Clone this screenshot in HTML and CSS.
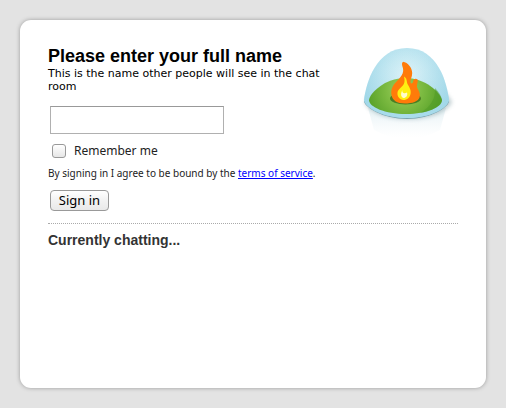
FILE: index.html
```html
<!DOCTYPE html>
<html lang="en">
<head>
<meta charset="utf-8">
<title>Sign in</title>
<link rel="stylesheet" href="styles.css">
</head>
<body>
<main class="card">
  <div class="top">
    <form class="signin">
      <h1 class="title"><label for="name">Please enter your full name</label></h1>
      <p class="hint">This is the name other people will see in the chat room</p>
      <input class="name" id="name" type="text">
      <div class="remember">
        <input class="check" id="remember" type="checkbox">
        <label for="remember">Remember me</label>
      </div>
      <p class="terms">By signing in I agree to be bound by the <a href="#">terms of service</a>.</p>
      <button class="submit" type="submit">Sign in</button>
    </form>
    <svg class="logo" viewBox="8 15 100 98" aria-hidden="true">
      <defs>
        <radialGradient id="dome" gradientUnits="userSpaceOnUse" cx="57" cy="48" r="46">
          <stop offset="0" stop-color="#eaf8fb"/>
          <stop offset=".45" stop-color="#c8eaf3"/>
          <stop offset="1" stop-color="#9fd7e8"/>
        </radialGradient>
        <linearGradient id="rim" x1="0" y1="0" x2="0" y2="1">
          <stop offset="0" stop-color="#a4d9e9" stop-opacity="0"/>
          <stop offset=".7" stop-color="#a4d9e9" stop-opacity=".3"/>
          <stop offset="1" stop-color="#a9dcec"/>
        </linearGradient>
        <radialGradient id="grass" gradientUnits="userSpaceOnUse" cx="54" cy="60" r="36">
          <stop offset="0" stop-color="#a2d266"/>
          <stop offset=".5" stop-color="#7dbb42"/>
          <stop offset="1" stop-color="#5aa32b"/>
        </radialGradient>
        <linearGradient id="mirror" gradientUnits="userSpaceOnUse" x1="0" y1="84" x2="0" y2="108">
          <stop offset="0" stop-color="#c8e2e9" stop-opacity=".35"/>
          <stop offset="1" stop-color="#e4f2f6" stop-opacity="0"/>
        </linearGradient>
        <filter id="soft" x="-20%" y="-40%" width="140%" height="180%"><feGaussianBlur stdDeviation="2"/></filter>
      </defs>
      <path fill="url(#mirror)" d="M18 78L24 100Q57 118 90 100L96 78Z"/>
      <path fill="#7f9ba2" opacity=".5" filter="url(#soft)" d="M15 73C25 94 91 95 102 72L95 62H20Z"/>
      <path fill="#79a4b0" d="M14 71C14 77 33 89 57 89S99 77 99 71Z"/>
      <path fill="url(#dome)" d="M14 70C16 53 26 18 57 18S97 53 99 70C98 78 80 88 57 88S15 78 14 70Z"/>
      <path fill="url(#rim)" d="M14 70C16 53 26 18 57 18S97 53 99 70C98 78 80 88 57 88S15 78 14 70Z"/>
      <path fill="url(#grass)" d="M19 70C20 63 35 48 55 48S90 62 92 70C92 77 77 84 56 84S19 77 19 70Z"/>
      <path fill="#4d9a25" opacity=".5" d="M85 58Q91 64 92 70C92 76 82 81 70 83Q86 74 85 58Z"/>
      <ellipse cx="55.5" cy="68.500" rx="15.5" ry="6" fill="#4b7e24"/>
      <path fill="#ff7b0a" d="M53 31.700C58 32.500 62 37.500 62.200 43C62.300 47 60 50 60.500 52.500C61 54 62.500 53.700 63 52C63.500 49 65.500 48 67.500 49.500C68.500 51.500 66 55 67.500 58.500C69 61.500 70.500 63.500 69.700 67C68.500 71.500 62 73.500 55 73.500C47 73.500 42 70.500 41.300 64C40.800 58 44 54 47 51C51 47 54 43 53 38.500C52.600 36 51 33.500 53 31.700Z"/>
      <path fill="#ffef12" d="M54 46.500C57 48 56.500 51 57.500 54C59 57 61 59 60.700 63C60.300 67.500 57 70 53.500 70C49.500 69.500 47 66.500 47.500 62.500C48 59 52 57.500 53.800 54C55 51.500 54.500 49 54 46.500Z"/>
      <path fill="#fffccf" d="M52.500 60C51.500 62.500 54 64.500 57 62.500C58 65.500 56 68 53.500 68C50.500 67 50.500 63 52.500 60Z"/>
    </svg>
  </div>
  <section class="chatting">
    <h2 class="subtitle">Currently chatting...</h2>
  </section>
</main>
</body>
</html>
```
FILE: styles.css
```css
* {
  box-sizing: border-box;
}

body {
  margin: 0;
  min-height: 100vh;
  display: flex;
  padding: 20px;
  background: #e3e3e3;
  color: #000;
  font-family: "Noto Sans", sans-serif;
}

.card {
  flex: 1;
  min-width: 0;
  padding: 25px 28px;
  background: #fff;
  border-radius: 11px;
  box-shadow: 0 0 4px #999;
}

.top {
  display: flex;
  justify-content: space-between;
  padding-bottom: 12px;
  border-bottom: 1px dotted #aaa;
}

.signin {
  flex: 1;
  max-width: 290px;
}

.title,
.subtitle,
.hint,
.terms {
  margin: 0;
}

.title {
  font: bold 18px/22px "Liberation Sans", Arial, sans-serif;
}

.hint {
  font: 11px/13px "DejaVu Sans", Verdana, sans-serif;
}

.name {
  display: block;
  width: 174px;
  height: 28px;
  margin: 13px 2px 8px;
  padding: 2px 6px;
  border: 1px solid #b0b0b0;
  border-top-color: #999;
  border-radius: 0;
  background: #fff;
  font: 14px "Noto Sans", sans-serif;
}

.remember {
  display: flex;
  align-items: center;
  gap: 8px;
  padding-left: 4px;
  color: #222;
  font-size: 12px;
  line-height: 17px;
}

.check {
  appearance: none;
  width: 14px;
  height: 14px;
  margin: 0;
  border: 1px solid #999;
  border-radius: 3px;
  background: linear-gradient(#fff, #e6e6e6);
}

.check:checked {
  background: #69a5df;
}

.terms {
  margin: 6px 0 8px;
  color: #222;
  font-size: 10px;
  line-height: 17px;
  white-space: nowrap;
}

.terms a {
  color: #00f;
}

.submit {
  display: block;
  width: 59px;
  height: 21px;
  margin: 0 2px;
  padding: 0;
  border: 1px solid #999;
  border-radius: 4px;
  background: linear-gradient(#fff, #f2f2f2 50%, #e9e9e9);
  color: #000;
  font: 13px/19px "Noto Sans", sans-serif;
}

.logo {
  flex: none;
  width: 100px;
  height: 98px;
}

.chatting {
  padding-top: 7px;
}

.subtitle {
  color: #333;
  font: bold 14px/18px "Liberation Sans", Arial, sans-serif;
}
```
